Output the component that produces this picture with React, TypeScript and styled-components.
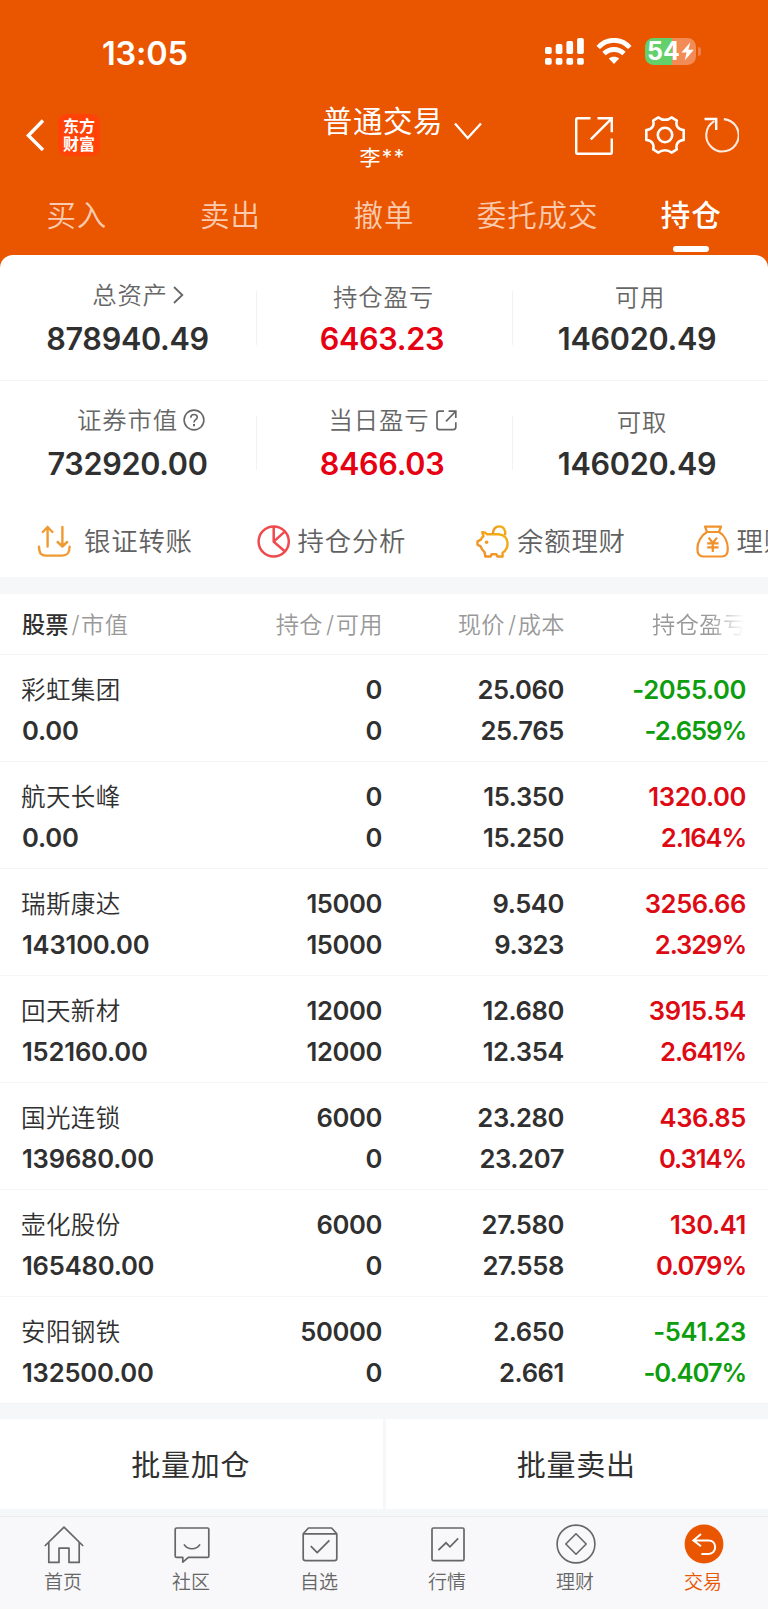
import React from "react";
import styled, { createGlobalStyle } from "styled-components";

const Global = createGlobalStyle`
  * { box-sizing: border-box; }
  body { margin: 0; background: #fff; }
  svg { display: block; flex: none; }
`;

const Screen = styled.div`
  width: 768px;
  height: 1610px;
  overflow: hidden;
  display: flex;
  flex-direction: column;
  background: #fff;
  color: #303030;
  font-family: Inter, "Noto Sans CJK SC", sans-serif;
  font-weight: 400;
  white-space: nowrap;
`;

/* ---------- orange header ---------- */

const Top = styled.header`
  height: 267px;
  flex: none;
  margin-bottom: -12px;
  background: #ea5500;
  color: #fff;
`;

const StatusBar = styled.div`
  display: flex;
  align-items: center;
  height: 103px;
  padding: 0 67px 0 102px;
`;

const Clock = styled.div`
  flex: 1;
  font-size: 32.5px;
  font-weight: 600;
  letter-spacing: -0.2px;
  line-height: 40px;
  padding-top: 4px;
`;

const Battery = styled.div`
  display: flex;
  align-items: center;
  margin-left: 13px;
`;

const BatteryBody = styled.div`
  width: 51px;
  height: 27px;
  display: flex;
  align-items: center;
  justify-content: center;
  gap: 1px;
  border-radius: 8.5px;
  background: linear-gradient(90deg, #64d06b 27px, #f28b55 27px);
  font-size: 25px;
  font-weight: 700;
  letter-spacing: 0;
  line-height: 27px;
`;

const BatteryCap = styled.i`
  width: 3px;
  height: 9px;
  margin-left: 2px;
  border-radius: 0 4px 4px 0;
  background: #f08049;
`;

const TitleBar = styled.div`
  display: grid;
  grid-template-columns: 317px 132px 1fr;
  height: 76px;
`;

const Brand = styled.div`
  display: flex;
  align-items: center;
  padding: 0 0 12px 26px;
  gap: 13px;
`;

const Logo = styled.div`
  width: 42px;
  height: 42px;
  border-radius: 9px;
  background: #ff4208;
  display: flex;
  flex-direction: column;
  align-items: center;
  justify-content: center;
  font-family: "Noto Sans CJK SC", sans-serif;
  font-size: 16px;
  font-weight: 700;
  line-height: 18px;
  padding-bottom: 3px;
`;

const Account = styled.div`
  display: flex;
  flex-direction: column;
  align-items: center;
`;

const AccountType = styled.div`
  font-size: 29.5px;
  letter-spacing: 0.6px;
  line-height: 36px;
`;

const AccountName = styled.div`
  font-size: 21px;
  letter-spacing: 1.4px;
  line-height: 37px;
  margin-right: 1px;
`;

const Tools = styled.div`
  display: flex;
  align-items: flex-start;
  padding: 13px 0 0 5px;
`;

const Tool = styled.div<{ $gap?: number; $drop?: number }>`
  margin-left: ${(p) => p.$gap ?? 0}px;
  margin-top: ${(p) => p.$drop ?? 0}px;
`;

const Tabs = styled.nav`
  display: grid;
  grid-template-columns: repeat(5, 1fr);
  height: 76px;
`;

const Tab = styled.div<{ $active?: boolean }>`
  display: flex;
  flex-direction: column;
  align-items: center;
  padding-top: 15px;
  font-size: 29.5px;
  letter-spacing: 0.9px;
  line-height: 43px;
  font-weight: ${(p) => (p.$active ? 500 : 350)};
  color: ${(p) => (p.$active ? "#fff" : "#fbcbb0")};

  &::after {
    content: "";
    width: 36px;
    height: 6px;
    margin-top: 9px;
    border-radius: 3px;
    background: ${(p) => (p.$active ? "#fff" : "transparent")};
  }
`;

/* ---------- asset summary ---------- */

const Sheet = styled.section`
  flex: none;
  height: 322px;
  border-radius: 13px 13px 0 0;
  background: #fff;
`;

const SummaryRow = styled.div<{ $last?: boolean }>`
  display: grid;
  grid-template-columns: 256px 256px 256px;
  height: ${(p) => (p.$last ? 123 : 126)}px;
  padding-top: ${(p) => (p.$last ? 25 : 26)}px;
  border-bottom: ${(p) => (p.$last ? "none" : "1px solid #f4f4f6")};
`;

const SummaryCell = styled.div`
  display: flex;
  flex-direction: column;
  align-items: center;

  & + & {
    background: linear-gradient(#f2f2f4, #f2f2f4) left 0 top 10px / 1px 54px no-repeat;
  }
  &:nth-child(2) {
    padding-right: 3px;
  }
  &:last-child {
    padding-right: 5px;
  }
`;

const SummaryLabel = styled.div<{ $shift?: number; $raise?: number }>`
  display: flex;
  align-items: center;
  margin-top: ${(p) => -(p.$raise ?? 0)}px;
  margin-bottom: ${(p) => p.$raise ?? 0}px;
  padding-left: ${(p) => p.$shift ?? 0}px;
  color: #666;
  font-size: 24.4px;
  font-weight: 350;
  letter-spacing: 0.8px;
  line-height: 32px;
`;

const SummaryValue = styled.div<{ $up?: boolean }>`
  margin-top: 6px;
  color: ${(p) => (p.$up ? "#e60012" : "#303030")};
  font-size: 30.6px;
  font-weight: 600;
  letter-spacing: -0.3px;
  line-height: 40px;
  margin-right: 1px;
`;

const Shortcuts = styled.div`
  display: flex;
  height: 73px;
  padding: 11px 0 0 37px;
  overflow: hidden;
`;

const Shortcut = styled.div<{ $gap: number }>`
  display: flex;
  align-items: center;
  flex: 0 0 219.5px;
  gap: ${(p) => p.$gap}px;
  height: 51px;
  color: #616161;
  font-size: 26.4px;
  font-weight: 350;
  letter-spacing: 0.8px;

  svg {
    margin-top: 1px;
  }
  span {
    padding-bottom: 3px;
  }
`;

const Band = styled.div<{ $h: number }>`
  flex: none;
  height: ${(p) => p.$h}px;
  background: #f6f7f9;
`;

/* ---------- holdings table ---------- */

const Columns = styled.div`
  display: grid;
  grid-template-columns: 201px 160px 182px 182px;
  padding: 0 22px 0 21px;
  border-bottom: 1px solid #f5f5f7;
  flex: none;
`;

const TableHead = styled(Columns)`
  height: 61px;
  color: #999;
  font-size: 23.2px;
  font-weight: 350;
  letter-spacing: 0.5px;
  line-height: 63px;
`;

const HeadCell = styled.div<{ $end?: boolean }>`
  text-align: ${(p) => (p.$end ? "right" : "left")};
  margin-left: 1px;
  margin-right: -1px;

  b {
    color: #303030;
    font-weight: 500;
    letter-spacing: 0;
  }
  i {
    font-style: normal;
    padding: 0 1px 0 3px;
  }
`;

const FadingHead = styled.div`
  margin-left: 88px;
  overflow: hidden;
  mask-image: linear-gradient(90deg, #000 58px, transparent 92px);
`;

const HoldingRow = styled(Columns)`
  height: 107px;
  padding-top: 15px;
`;

const Pair = styled.div<{ $tone?: "up" | "down" }>`
  display: flex;
  flex-direction: column;
  align-items: flex-end;
  font-size: 25.6px;
  font-weight: 600;
  letter-spacing: -0.4px;
  line-height: 40px;
  color: ${(p) => (p.$tone === "up" ? "#dd0a14" : p.$tone === "down" ? "#0d9d0d" : "#303030")};

  span + span {
    margin-top: 1px;
  }
`;

const NamePair = styled(Pair)`
  align-items: flex-start;
  letter-spacing: -0.2px;

  span + span {
    margin-left: 1px;
  }
`;

const Rate = styled.span`
  letter-spacing: -1.1px;
`;

const StockName = styled.span`
  font-size: 24.5px;
  font-weight: 350;
  letter-spacing: 0.4px;
`;

/* ---------- bottom ---------- */

const BatchBar = styled.div`
  flex: none;
  display: grid;
  grid-template-columns: 1fr 1fr;
  gap: 3px;
  height: 90px;
  background: #f6f7f9;
`;

const BatchButton = styled.button`
  border: 0;
  padding: 0 1px 3px 0;
  background: #fff;
  color: #303030;
  font: inherit;
  font-size: 29px;
  letter-spacing: 0.8px;
`;

const TabBar = styled.nav`
  flex: none;
  display: grid;
  grid-template-columns: repeat(6, 1fr);
  height: 93px;
  border-top: 1px solid #ececee;
  background: #f8f8fa;
`;

const TabItem = styled.div<{ $active?: boolean }>`
  display: flex;
  flex-direction: column;
  align-items: center;
  padding-top: 7px;
  color: ${(p) => (p.$active ? "#ea5500" : "#666")};
  font-size: 19px;
  font-weight: 350;
  line-height: 28px;

  svg {
    margin-bottom: 5px;
  }
  span {
    padding-right: 2px;
  }
`;

const line = { fill: "none", stroke: "currentColor" } as const;

const Signal = () => (
  <svg width="39" height="27" viewBox="0 0 39 27" fill="#fff">
    {[0, 1, 2, 3].map((n) => (
      <g key={n}>
        <rect x={n * 10.7} y={9 - n * 3} width="6.7" height={7 + n * 3} rx="1.8" />
        <rect x={n * 10.7} y="20" width="6.7" height="6.8" rx="1.8" />
      </g>
    ))}
  </svg>
);

const WifiSvg = styled.svg`
  margin-left: 12px;
`;

const Wifi = () => (
  <WifiSvg width="36" height="27" viewBox="0 0 36 27" {...line} strokeWidth="4.8">
    <path d="M2.2 9.5C11-.1 25-.1 33.8 9.5" />
    <path d="M8 15.6c5.8-5.5 14.2-5.5 20 0" />
    <path d="M18 26 12.8 20.6c2.8-2.6 7.6-2.6 10.4 0z" fill="#fff" stroke="none" />
  </WifiSvg>
);

const Bolt = () => (
  <svg width="13" height="19" viewBox="0 0 13 19" fill="#fff">
    <path d="M9.4.3.4 10.4h5.2L3.7 18.5 12.8 7.8H7.4z" />
  </svg>
);

const Back = () => (
  <svg width="19" height="32" viewBox="0 0 19 32" {...line} strokeWidth="3.4">
    <path d="M17 1.5 2.4 16.5 17 31" />
  </svg>
);

const Down = () => (
  <svg width="28" height="19" viewBox="0 0 28 19" {...line} strokeWidth="2.3">
    <path d="M1 1.5 13.7 16 27 1.5" />
  </svg>
);

const Share = () => (
  <svg width="38" height="38" viewBox="0 0 38 38" {...line} strokeWidth="2.5">
    <path d="M15.5 1.3H2.6Q1.2 1.3 1.2 2.7V35.3Q1.2 36.7 2.6 36.7H35.4Q36.8 36.7 36.8 35.3V21.6" />
    <path d="M22.5 1.3H36.8V15.2M36.6 1.6 15.8 22.4" />
  </svg>
);

const Gear = () => (
  <svg width="40" height="38" viewBox="0 0 40 38" {...line} strokeWidth="2.6" strokeLinejoin="round">
    <path d="M13.4 1.4C17.2 4.6 22.8 4.6 26.6 1.4L31.8 4.6C30.4 9.6 33 13.6 38.7 14V24C33 24.4 30.4 28.4 31.8 33.4L26.6 36.6C22.8 33.4 17.2 33.4 13.4 36.6L8.2 33.4C9.6 28.4 7 24.4 1.3 24V14C7 13.6 9.6 9.6 8.2 4.6Z" />
    <circle cx="20" cy="19" r="7.2" />
  </svg>
);

const Refresh = () => (
  <svg width="36" height="36" viewBox="0 0 36 36" {...line} strokeWidth="2.1">
    <path d="M11.4 4.2A16.2 16.2 0 1 0 20.8 2.1" opacity=".88" />
    <path d="M1.5 2H13.2V13" strokeWidth="2.4" />
  </svg>
);

const LabelSvg = styled.svg<{ $gap: number }>`
  margin-left: ${(p) => p.$gap}px;
`;

const ChevronRight = () => (
  <LabelSvg $gap={5} width="11" height="18" viewBox="0 0 11 18" {...line} strokeWidth="1.8">
    <path d="M1 1 9.3 9 1 17" />
  </LabelSvg>
);

const Help = () => (
  <LabelSvg $gap={5} width="22" height="22" viewBox="0 0 22 22" {...line} strokeWidth="1.6">
    <circle cx="11" cy="11" r="9.9" />
    <path d="M7.8 8.7C7.8 4.4 14.3 4.6 14.3 8.3 14.3 10.7 11 10.7 11 13.4" />
    <path d="M11 15v2.2" strokeWidth="2" />
  </LabelSvg>
);

const ShareSmall = () => (
  <LabelSvg $gap={7} width="21" height="21" viewBox="0 0 21 21" {...line} strokeWidth="1.7">
    <path d="M8 1.2H3.4Q1 1.2 1 3.6V17Q1 19.6 3.4 19.6H17.2Q19.8 19.6 19.8 17V12.3" />
    <path d="M12.6 1.2H19.8V8M19.5 1.5 10 11.4" />
  </LabelSvg>
);

const Transfer = () => (
  <svg width="34" height="33" viewBox="0 0 34 33" fill="none" stroke="#f09a33" strokeWidth="2.4" strokeLinecap="round" strokeLinejoin="round">
    <path d="M2 21.6C2 28.6 4.2 30.6 9.2 30.6H25.2C30.2 30.6 32.6 28.6 32.6 21.6" />
    <path d="M10.6 21.5V2M5.8 7 10.6 2 15.4 7M25.4 2V21.5M20.6 17 25.4 21.5 30.2 17" />
  </svg>
);

const Pie = () => (
  <svg width="33" height="33" viewBox="0 0 33 33" fill="none" stroke="#ef4a4e" strokeWidth="2.5">
    <circle cx="16.7" cy="16.5" r="15.1" />
    <path d="M16.7 1.5V16.7L28 26.5M16.7 16.7 28 6.4" />
  </svg>
);

const Piggy = () => (
  <svg width="33" height="33" viewBox="0 0 33 33" fill="none" strokeWidth="2.4" strokeLinejoin="round">
    <defs>
      <linearGradient id="pig" x1="0" y1="1" x2="1" y2="0">
        <stop offset="0" stopColor="#f08a2c" />
        <stop offset="1" stopColor="#f2b50f" />
      </linearGradient>
    </defs>
    <g stroke="url(#pig)">
      <path d="M6.2 7.2C8 7 9.8 7.8 11 9.2H22.5C28.3 9.8 31.6 13.5 31.6 18.4C31.6 23 29.3 26 26.6 27.7V31.5H21.4L20.4 29.3H15.6L14.6 31.5H9.4L8.6 27.2C6.8 25.8 5.4 23.7 4.6 21.4L1.5 19.7V16.4L4.9 14.6C5.6 12.6 6.4 12 7.5 11.2Z" />
      <path d="M17 8.8C16.8 4.3 19.5 1.4 23.3 1.4C27.6 1.4 30.2 5.6 29 10.2" />
    </g>
    <circle cx="10.6" cy="17.3" r="1.8" fill="#f09a2c" />
  </svg>
);

const MoneyBag = () => (
  <svg width="33" height="33" viewBox="0 0 33 33" fill="none" stroke="#f1912c" strokeWidth="2.2" strokeLinejoin="round">
    <path d="M11 7 9 1.6H25L23 7ZM11 7C5.4 10.2 1.4 17 1.4 23.8C1.4 29 3.6 31.5 7.2 31.5H26C29.8 31.5 31.8 29 31.8 23.8C31.8 17 28.6 10.2 23 7" />
    <path d="M12.6 12.6 16.8 18 21 12.6M16.8 18V27M11.2 18.4H22.6M11.2 22.4H22.6" />
  </svg>
);

const HomeIcon = () => (
  <svg width="40" height="40" viewBox="0 0 40 40" {...line} strokeWidth="1.7" strokeLinejoin="round">
    <path d="M.8 22 20 3.2 39.2 22M4.8 18.4V38.4H15V24.2H25V38.4H35.2V18.4" />
  </svg>
);

const ChatIcon = () => (
  <svg width="40" height="40" viewBox="0 0 40 40" {...line} strokeWidth="1.7" strokeLinejoin="round">
    <path d="M4.8 4H35.6Q36.8 4 36.8 5.2V32.2Q36.8 33.4 35.6 33.4H16.4L10.8 38.2V33.4H4.8Q3.2 33.4 3.2 32.2V5.2Q3.2 4 4.8 4Z" />
    <path d="M12 20.4C15.5 26.2 24.5 26.2 28 20.4" />
  </svg>
);

const PickIcon = () => (
  <svg width="40" height="40" viewBox="0 0 40 40" {...line} strokeWidth="1.7" strokeLinejoin="round">
    <path d="M3.2 9.8 8.4 4H31.6L36.8 9.8V34.2Q36.8 36.6 34.4 36.6H5.6Q3.2 36.6 3.2 34.2ZM3.2 9.8H36.8" />
    <path d="M10.8 22.2 17.2 28.6 29.4 16.4" />
  </svg>
);

const ChartIcon = () => (
  <svg width="40" height="40" viewBox="0 0 40 40" {...line} strokeWidth="1.7">
    <rect x="4" y="4" width="32" height="32.6" rx="1.4" />
    <path d="M10.4 26.2 18 18.8 22 22.8 30.2 14.4" />
  </svg>
);

const WealthIcon = () => (
  <svg width="40" height="40" viewBox="0 0 40 40" {...line} strokeWidth="1.6" strokeLinejoin="round">
    <circle cx="20" cy="20" r="18.9" />
    <path d="M20 9.8 30.2 20 20 30.2 9.8 20Z" />
  </svg>
);

const TradeIcon = () => (
  <svg width="40" height="40" viewBox="0 0 40 40" fill="none">
    <circle cx="20" cy="20" r="19.4" fill="#ea5500" />
    <path d="M17 10 9.4 16.4 17 22.2M9.8 16.4H24.4C33.4 16.4 33.4 30 24.4 30H17.4" stroke="#fff" strokeWidth="2" />
  </svg>
);

type Holding = {
  name: string;
  value: string;
  held: string;
  usable: string;
  price: string;
  cost: string;
  profit: string;
  rate: string;
};

const holdings: Holding[] = [
  { name: "彩虹集团", value: "0.00", held: "0", usable: "0", price: "25.060", cost: "25.765", profit: "-2055.00", rate: "-2.659%" },
  { name: "航天长峰", value: "0.00", held: "0", usable: "0", price: "15.350", cost: "15.250", profit: "1320.00", rate: "2.164%" },
  { name: "瑞斯康达", value: "143100.00", held: "15000", usable: "15000", price: "9.540", cost: "9.323", profit: "3256.66", rate: "2.329%" },
  { name: "回天新材", value: "152160.00", held: "12000", usable: "12000", price: "12.680", cost: "12.354", profit: "3915.54", rate: "2.641%" },
  { name: "国光连锁", value: "139680.00", held: "6000", usable: "0", price: "23.280", cost: "23.207", profit: "436.85", rate: "0.314%" },
  { name: "壶化股份", value: "165480.00", held: "6000", usable: "0", price: "27.580", cost: "27.558", profit: "130.41", rate: "0.079%" },
  { name: "安阳钢铁", value: "132500.00", held: "50000", usable: "0", price: "2.650", cost: "2.661", profit: "-541.23", rate: "-0.407%" },
];

const tabs = ["买入", "卖出", "撤单", "委托成交", "持仓"];

const shortcuts = [
  { text: "银证转账", icon: <Transfer />, gap: 13 },
  { text: "持仓分析", icon: <Pie />, gap: 8 },
  { text: "余额理财", icon: <Piggy />, gap: 8 },
  { text: "理财", icon: <MoneyBag />, gap: 8 },
];

const navItems = [
  { text: "首页", icon: <HomeIcon /> },
  { text: "社区", icon: <ChatIcon /> },
  { text: "自选", icon: <PickIcon /> },
  { text: "行情", icon: <ChartIcon /> },
  { text: "理财", icon: <WealthIcon /> },
  { text: "交易", icon: <TradeIcon /> },
];

export default function App() {
  return (
    <Screen>
      <Global />
      <Top>
        <StatusBar>
          <Clock>13:05</Clock>
          <Signal />
          <Wifi />
          <Battery>
            <BatteryBody>
              54
              <Bolt />
            </BatteryBody>
            <BatteryCap />
          </Battery>
        </StatusBar>
        <TitleBar>
          <Brand>
            <Back />
            <Logo>
              <span>东方</span>
              <span>财富</span>
            </Logo>
          </Brand>
          <Account>
            <AccountType>普通交易</AccountType>
            <AccountName>李**</AccountName>
          </Account>
          <Tools>
            <Tool $drop={6}><Down /></Tool>
            <Tool $gap={93} $drop={1}><Share /></Tool>
            <Tool $gap={32}><Gear /></Tool>
            <Tool $gap={18} $drop={1}><Refresh /></Tool>
          </Tools>
        </TitleBar>
        <Tabs>
          {tabs.map((t) => (
            <Tab key={t} $active={t === "持仓"}>{t}</Tab>
          ))}
        </Tabs>
      </Top>

      <Sheet>
        <SummaryRow>
          <SummaryCell>
            <SummaryLabel $shift={20} $raise={2}>总资产<ChevronRight /></SummaryLabel>
            <SummaryValue>878940.49</SummaryValue>
          </SummaryCell>
          <SummaryCell>
            <SummaryLabel $shift={2}>持仓盈亏</SummaryLabel>
            <SummaryValue $up>6463.23</SummaryValue>
          </SummaryCell>
          <SummaryCell>
            <SummaryLabel $shift={5}>可用</SummaryLabel>
            <SummaryValue>146020.49</SummaryValue>
          </SummaryCell>
        </SummaryRow>
        <SummaryRow $last>
          <SummaryCell>
            <SummaryLabel $shift={26} $raise={2}>证券市值<Help /></SummaryLabel>
            <SummaryValue>732920.00</SummaryValue>
          </SummaryCell>
          <SummaryCell>
            <SummaryLabel $shift={21} $raise={2}>当日盈亏<ShareSmall /></SummaryLabel>
            <SummaryValue $up>8466.03</SummaryValue>
          </SummaryCell>
          <SummaryCell>
            <SummaryLabel $shift={9}>可取</SummaryLabel>
            <SummaryValue>146020.49</SummaryValue>
          </SummaryCell>
        </SummaryRow>
        <Shortcuts>
          {shortcuts.map((s) => (
            <Shortcut key={s.text} $gap={s.gap}>
              {s.icon}
              <span>{s.text}</span>
            </Shortcut>
          ))}
        </Shortcuts>
      </Sheet>

      <Band $h={17} />

      <TableHead>
        <HeadCell><b>股票</b><i>/</i>市值</HeadCell>
        <HeadCell $end>持仓<i>/</i>可用</HeadCell>
        <HeadCell $end>现价<i>/</i>成本</HeadCell>
        <FadingHead>持仓盈亏</FadingHead>
      </TableHead>
      {holdings.map((h) => {
        const tone = h.profit.startsWith("-") ? "down" : "up";
        return (
          <HoldingRow key={h.name}>
            <NamePair>
              <StockName>{h.name}</StockName>
              <span>{h.value}</span>
            </NamePair>
            <Pair>
              <span>{h.held}</span>
              <span>{h.usable}</span>
            </Pair>
            <Pair>
              <span>{h.price}</span>
              <span>{h.cost}</span>
            </Pair>
            <Pair $tone={tone}>
              <span>{h.profit}</span>
              <Rate>{h.rate}</Rate>
            </Pair>
          </HoldingRow>
        );
      })}

      <Band $h={15} />
      <BatchBar>
        <BatchButton>批量加仓</BatchButton>
        <BatchButton>批量卖出</BatchButton>
      </BatchBar>
      <Band $h={7} />

      <TabBar>
        {navItems.map((n) => (
          <TabItem key={n.text} $active={n.text === "交易"}>
            {n.icon}
            <span>{n.text}</span>
          </TabItem>
        ))}
      </TabBar>
    </Screen>
  );
}
